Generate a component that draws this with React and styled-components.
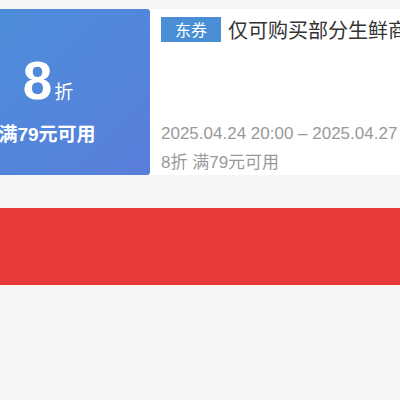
import styled, { createGlobalStyle } from 'styled-components'

const Global = createGlobalStyle`
    html, body {
        margin: 0;
        padding: 0;
        background: #f5f5f5;
        overflow: hidden;
        font-family: "Liberation Sans", "Noto Sans CJK SC", sans-serif;
    }
`
const Page = styled.div`
    width: 400px;
    height: 400px;
    background: #f5f5f5;
    padding-top: 9px;
    box-sizing: border-box;
    overflow: hidden;
`
const Card = styled.section`
    display: flex;
    height: 166px;
    background: #fff;
    width: 520px;
`
const Left = styled.div`
    flex: 0 0 206px;
    margin-left: -56px;
    background: linear-gradient(135deg, #4a90da 0%, #5a7edb 100%);
    border-radius: 0 3px 3px 0;
    color: #fff;
    display: flex;
    flex-direction: column;
    align-items: center;
    padding-top: 44px;
    box-sizing: border-box;
`
const Amount = styled.div`
    display: flex;
    align-items: baseline;
    margin-left: 2px;
`
const Big = styled.span`
    font-family: "Liberation Sans", Arial, sans-serif;
    font-size: 53px;
    font-weight: bold;
    line-height: 56px;
`
const Unit = styled.span`
    font-size: 19px;
    font-family: "Noto Sans CJK SC", sans-serif;
    margin-left: 2px;
`
const Cond = styled.div`
    font-size: 19px;
    font-weight: bold;
    line-height: 24px;
    margin-top: 14px;
`
const Right = styled.div`
    flex: 1;
    padding: 8px 0 0 11px;
    display: flex;
    flex-direction: column;
    min-width: 0;
`
const TitleRow = styled.div`
    display: flex;
    align-items: center;
    white-space: nowrap;
`
const Tag = styled.span`
    display: inline-block;
    background: #4a8fd6;
    color: #fff;
    font-family: "Noto Sans CJK SC", sans-serif;
    font-size: 16px;
    line-height: 25px;
    padding: 0 14px;
    margin-right: 7px;
`
const Title = styled.span`
    font-family: "Noto Sans CJK SC", sans-serif;
    font-size: 20px;
    color: #333;
    line-height: 25px;
`
const Info = styled.div`
    font-size: 17px;
    color: #999;
    line-height: 20px;
    white-space: nowrap;
    margin-top: ${p => p.$top}px;
`
const Bar = styled.div`
    height: 77px;
    background: #e8393b;
    margin-top: 33px;
`

export default function App() {
    return (
        <Page>
            <Global />
            <Card>
                <Left>
                    <Amount>
                        <Big>8</Big>
                        <Unit>折</Unit>
                    </Amount>
                    <Cond>满79元可用</Cond>
                </Left>
                <Right>
                    <TitleRow>
                        <Tag>东券</Tag>
                        <Title>仅可购买部分生鲜商品</Title>
                    </TitleRow>
                    <Info $top={82}>2025.04.24 20:00 – 2025.04.27 23:59</Info>
                    <Info $top={9}>8折 满79元可用</Info>
                </Right>
            </Card>
            <Bar />
        </Page>
    )
}
